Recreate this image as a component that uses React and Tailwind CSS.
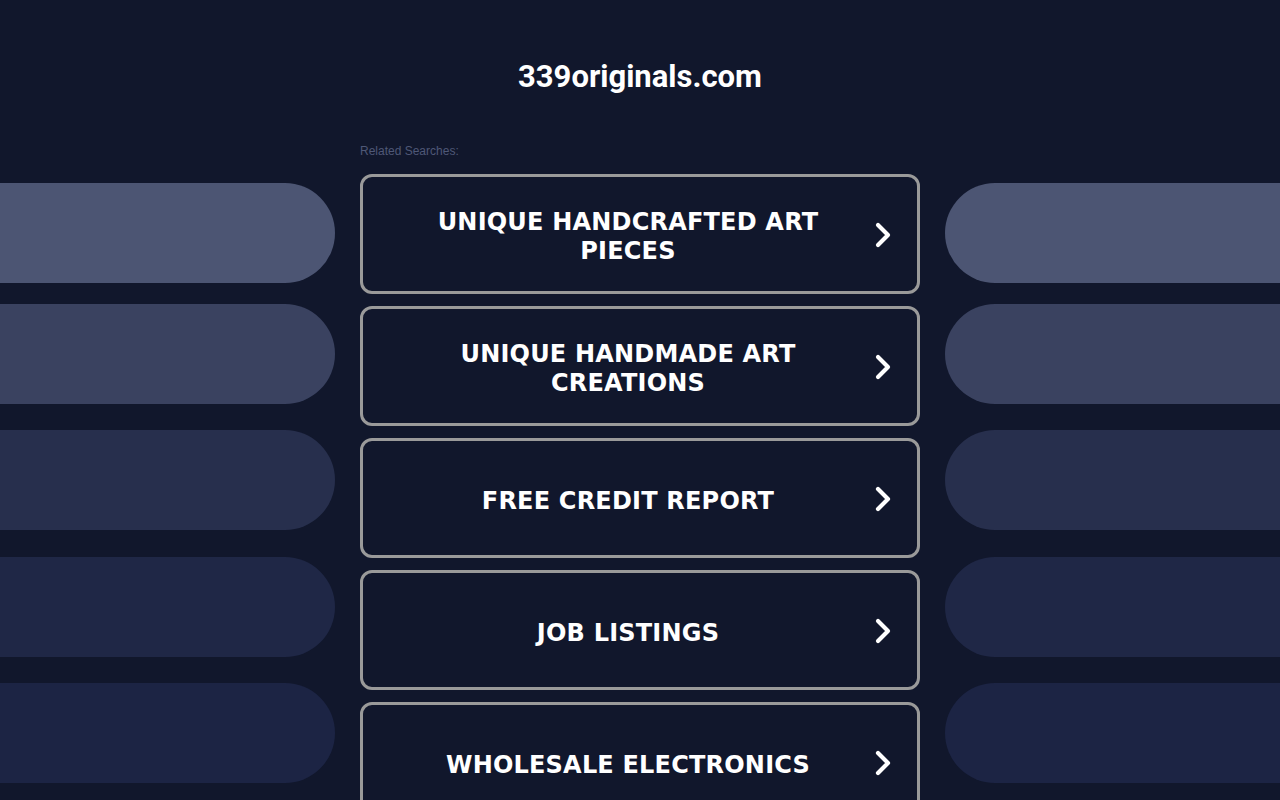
import React from "react";

const items = [
  ["UNIQUE HANDCRAFTED ART", "PIECES"],
  ["UNIQUE HANDMADE ART", "CREATIONS"],
  ["FREE CREDIT REPORT"],
  ["JOB LISTINGS"],
  ["WHOLESALE ELECTRONICS"],
];

const pills = [
  { cls: "bg-[#4c5573]", mt: "mt-[183px]" },
  { cls: "bg-[#3a4260]", mt: "mt-[21px]" },
  { cls: "bg-[#272f4d]", mt: "mt-[26px]" },
  { cls: "bg-[#1f2746]", mt: "mt-[27px]" },
  { cls: "bg-[#1c2444]", mt: "mt-[26px]" },
];

function Chevron() {
  return (
    <svg width="20" height="28" viewBox="0 0 20 28" className="shrink-0 mt-[2px]">
      <path d="M5 4 L15 14 L5 24" fill="none" stroke="white" strokeWidth="4.2" strokeLinecap="round" strokeLinejoin="round" />
    </svg>
  );
}

export default function App() {
  return (
    <div className="min-h-[800px] w-full bg-[#11172c] overflow-hidden flex">
      <div className="flex-1 flex flex-col pr-[25px]">
        {pills.map((p, i) => (
          <div key={i} className={`${p.mt} h-[100px] rounded-r-[50px] ${p.cls}`} />
        ))}
      </div>
      <div className="w-[560px] shrink-0 flex flex-col">
        <h1 className="mt-[57px] text-center text-white font-bold text-[31px] leading-[40px] font-['Roboto',sans-serif]">
          339originals.com
        </h1>
        <div className="mt-[46px] text-[12px] leading-[16px] text-[#4f5877] font-['Liberation_Sans',sans-serif]">
          Related Searches:
        </div>
        <div className="mt-[15px] flex flex-col gap-[12px]">
          {items.map((lines, i) => (
            <div
              key={i}
              className="h-[120px] rounded-[12px] border-[3px] border-[#9a9a9a] flex items-center pl-[20px] pr-[24px]"
            >
              <div className="flex-1 pt-[6px] text-center text-white font-bold text-[24px] leading-[29px] tracking-[0.2px] font-['DejaVu_Sans',sans-serif]">
                {lines.map((l, j) => (
                  <div key={j}>{l}</div>
                ))}
              </div>
              <Chevron />
            </div>
          ))}
        </div>
      </div>
      <div className="flex-1 flex flex-col pl-[25px]">
        {pills.map((p, i) => (
          <div key={i} className={`${p.mt} h-[100px] rounded-l-[50px] ${p.cls}`} />
        ))}
      </div>
    </div>
  );
}
